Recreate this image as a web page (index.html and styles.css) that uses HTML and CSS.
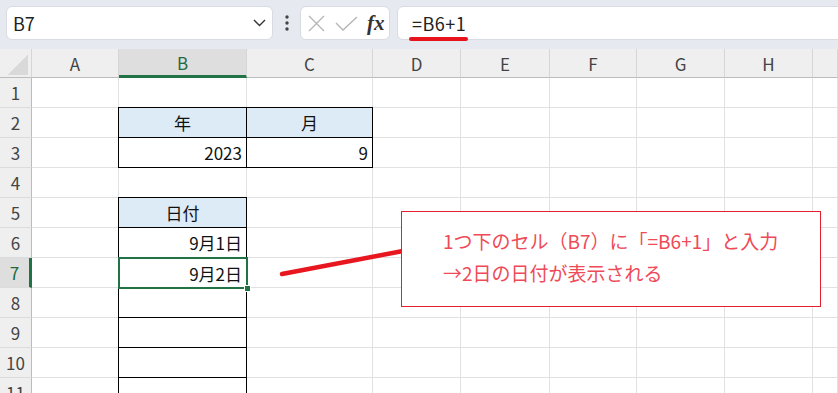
FILE: index.html
```html
<!DOCTYPE html>
<html lang="ja">
<head>
    <meta charset="UTF-8">
    <title>日付の連続入力</title>
    <link rel="stylesheet" href="styles.css">
</head>
<body>
    <div class="topbar">
        <div class="namebox">
            <span>B7</span>
            <svg class="chev" width="13" height="8" viewBox="0 0 13 8"><polyline points="1,1 6.5,6.5 12,1" fill="none" stroke="#333" stroke-width="1.4"/></svg>
        </div>
        <div class="more">
            <svg width="4" height="16" viewBox="0 0 4 16"><circle cx="2" cy="2" r="1.7" fill="#444"/><circle cx="2" cy="8" r="1.7" fill="#444"/><circle cx="2" cy="14" r="1.7" fill="#444"/></svg>
        </div>
        <div class="fxbox">
            <svg width="17" height="17" viewBox="0 0 17 17"><path d="M1 1 L16 16 M16 1 L1 16" stroke="#b5b5b5" stroke-width="1.3" fill="none"/></svg>
            <svg width="23" height="15" viewBox="0 0 23 15"><polyline points="1,7 8,14 22,1" fill="none" stroke="#b5b5b5" stroke-width="1.3"/></svg>
            <span class="fx">fx</span>
        </div>
        <div class="formula">
            <span class="val">=B6+1</span>
        </div>
    </div>

    <div class="sheet">
        <div class="row hdr">
            <div class="corner"><div class="tri"></div></div>
            <div class="ch">A</div>
            <div class="ch on">B</div>
            <div class="ch">C</div>
            <div class="ch">D</div>
            <div class="ch">E</div>
            <div class="ch">F</div>
            <div class="ch">G</div>
            <div class="ch">H</div>
            <div class="ch"></div>
        </div>
        <div class="row">
            <div class="rh">1</div>
            <div class="c"></div><div class="c"></div><div class="c"></div><div class="c"></div><div class="c"></div><div class="c"></div><div class="c"></div><div class="c"></div><div class="c"></div>
        </div>
        <div class="row">
            <div class="rh">2</div>
            <div class="c"></div><div class="c b head">年</div><div class="c b head">月</div><div class="c"></div><div class="c"></div><div class="c"></div><div class="c"></div><div class="c"></div><div class="c"></div>
        </div>
        <div class="row">
            <div class="rh">3</div>
            <div class="c"></div><div class="c b">2023</div><div class="c b">9</div><div class="c"></div><div class="c"></div><div class="c"></div><div class="c"></div><div class="c"></div><div class="c"></div>
        </div>
        <div class="row">
            <div class="rh">4</div>
            <div class="c"></div><div class="c"></div><div class="c"></div><div class="c"></div><div class="c"></div><div class="c"></div><div class="c"></div><div class="c"></div><div class="c"></div>
        </div>
        <div class="row">
            <div class="rh">5</div>
            <div class="c"></div><div class="c b head">日付</div><div class="c"></div><div class="c"></div><div class="c"></div><div class="c"></div><div class="c"></div><div class="c"></div><div class="c"></div>
        </div>
        <div class="row">
            <div class="rh">6</div>
            <div class="c"></div><div class="c b">9月1日</div><div class="c"></div><div class="c"></div><div class="c"></div><div class="c"></div><div class="c"></div><div class="c"></div><div class="c"></div>
        </div>
        <div class="row">
            <div class="rh on">7</div>
            <div class="c"></div><div class="c sel">9月2日</div><div class="c"></div><div class="c"></div><div class="c"></div><div class="c"></div><div class="c"></div><div class="c"></div><div class="c"></div>
        </div>
        <div class="row">
            <div class="rh">8</div>
            <div class="c"></div><div class="c b"></div><div class="c"></div><div class="c"></div><div class="c"></div><div class="c"></div><div class="c"></div><div class="c"></div><div class="c"></div>
        </div>
        <div class="row">
            <div class="rh">9</div>
            <div class="c"></div><div class="c b"></div><div class="c"></div><div class="c"></div><div class="c"></div><div class="c"></div><div class="c"></div><div class="c"></div><div class="c"></div>
        </div>
        <div class="row">
            <div class="rh">10</div>
            <div class="c"></div><div class="c b"></div><div class="c"></div><div class="c"></div><div class="c"></div><div class="c"></div><div class="c"></div><div class="c"></div><div class="c"></div>
        </div>
        <div class="row">
            <div class="rh">11</div>
            <div class="c"></div><div class="c b"></div><div class="c"></div><div class="c"></div><div class="c"></div><div class="c"></div><div class="c"></div><div class="c"></div><div class="c"></div>
        </div>

        <!-- annotation drawn over the grid -->
        <svg class="pointer" width="838" height="344" viewBox="0 0 838 344">
            <line x1="282" y1="225" x2="403" y2="202" stroke="#e8161f" stroke-width="4.5" stroke-linecap="round"/>
        </svg>
        <div class="note">
            <p>1つ下のセル（B7）に「=B6+1」と入力</p>
            <p>→2日の日付が表示される</p>
        </div>
    </div>
</body>
</html>
```

FILE: styles.css
```css
body {
    margin: 0;
    width: 838px;
    height: 393px;
    overflow: hidden;
    background: #fff;
    color: #222;
    font-family: "Noto Sans CJK JP", "Noto Sans", sans-serif;
}

/* formula bar */
.topbar {
    height: 49px;
    box-sizing: border-box;
    padding: 6px 0 0 6px;
    background: #e6e9ef;
    display: flex;
    align-items: flex-start;
}
.namebox {
    width: 267px;
    height: 34px;
    box-sizing: border-box;
    padding: 0 6px 0 6px;
    background: #fff;
    border: 1px solid #d8dbe2;
    border-radius: 6px;
    display: flex;
    align-items: center;
    justify-content: space-between;
    font-size: 18px;
}
.more {
    width: 27px;
    height: 34px;
    display: flex;
    align-items: center;
    justify-content: center;
}
.fxbox {
    width: 90px;
    height: 34px;
    box-sizing: border-box;
    padding: 0 0 0 7px;
    background: #fff;
    border: 1px solid #d8dbe2;
    border-radius: 6px;
    display: flex;
    align-items: center;
    gap: 10px;
}
.fx {
    font-family: "Liberation Serif", serif;
    font-style: italic;
    font-weight: bold;
    font-size: 21px;
    color: #333;
    margin-left: -1px;
}
.formula {
    flex: 1;
    height: 34px;
    margin: 0 -10px 0 7px;
    box-sizing: border-box;
    padding-left: 14px;
    background: #fff;
    border: 1px solid #d8dbe2;
    border-radius: 6px;
    display: flex;
    align-items: center;
    font-size: 18px;
}
.val {
    position: relative;
    letter-spacing: 0.5px;
}
.val::after {
    content: "";
    position: absolute;
    left: -3px;
    right: -2px;
    bottom: -5px;
    height: 4px;
    border-radius: 2px;
    background: #e8141c;
}

/* grid */
.sheet {
    position: relative;
}
.row {
    display: grid;
    grid-template-columns: 32px 87px 128px 126px 88px 89px 87px 88px 88px 1fr;
    height: 30px;
}
.row.hdr {
    height: 29px;
    background: #efefef;
}
.corner {
    box-sizing: border-box;
    border-right: 1px solid #d6d6d6;
    border-bottom: 1px solid #bcbcbc;
    padding: 0 3px 2px 0;
    display: flex;
    align-items: flex-end;
    justify-content: flex-end;
}
.tri {
    width: 21px;
    height: 20px;
    background: linear-gradient(to bottom right, transparent 50%, #d9d9d9 50%);
}
.ch {
    box-sizing: border-box;
    border-right: 1px solid #d6d6d6;
    border-bottom: 1px solid #bcbcbc;
    display: flex;
    align-items: center;
    justify-content: center;
    font-size: 17px;
    color: #444;
}
.ch.on {
    background: #dedede;
    color: #1d6b41;
    border-bottom: 3px solid #217346;
}
.rh {
    box-sizing: border-box;
    background: #efefef;
    border-right: 1px solid #bcbcbc;
    border-bottom: 1px solid #dcdcdc;
    display: flex;
    align-items: center;
    justify-content: center;
    font-size: 17px;
    color: #444;
}
.rh.on {
    background: #dedede;
    color: #1d6b41;
    border-right: 3px solid #217346;
}
.c {
    box-sizing: border-box;
    border-right: 1px solid #e1e1e1;
    border-bottom: 1px solid #e1e1e1;
    padding-right: 4px;
    display: flex;
    align-items: center;
    justify-content: flex-end;
    font-size: 17px;
    color: #111;
    white-space: nowrap;
}
.c.b {
    border: 1px solid #000;
    margin: -1px 0 0 -1px;
}
.c.head {
    background: #ddebf7;
    justify-content: center;
    padding: 0;
}
.c.sel {
    border: 2px solid #217346;
    margin: -1px;
    z-index: 2;
    position: relative;
}
.c.sel::after {
    content: "";
    position: absolute;
    right: -5px;
    bottom: -5px;
    width: 5px;
    height: 5px;
    background: #217346;
    border: 1px solid #fff;
}

/* annotation */
.pointer {
    position: absolute;
    left: 0;
    top: 0;
    z-index: 3;
}
.note {
    position: absolute;
    left: 401px;
    top: 162px;
    width: 420px;
    height: 96px;
    box-sizing: border-box;
    padding: 13px 0 0 41px;
    background: #fff;
    border: 1.5px solid #e3202b;
    color: #ef4a57;
    font-size: 19px;
    line-height: 32px;
    z-index: 4;
}
.note p {
    margin: 0;
    white-space: nowrap;
}
```
